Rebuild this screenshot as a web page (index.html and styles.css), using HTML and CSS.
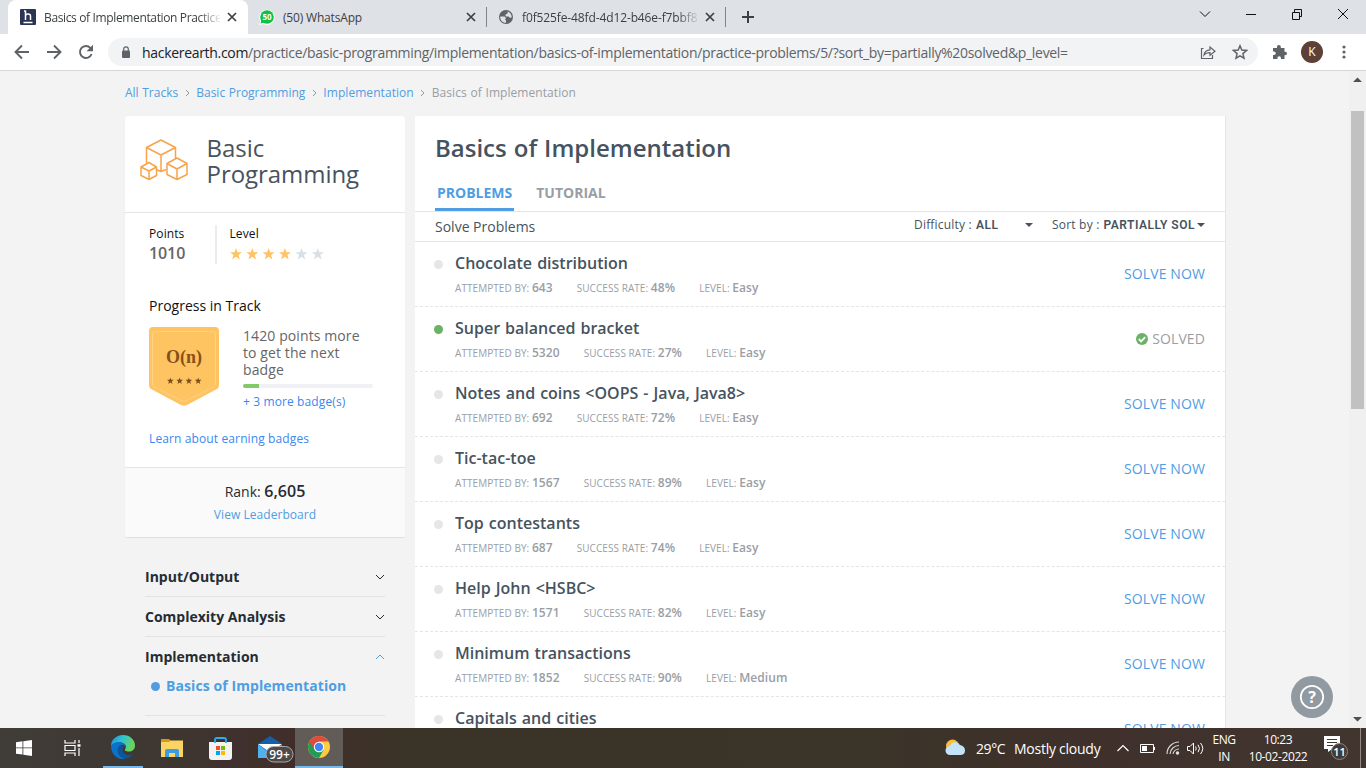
FILE: index.html
```html
<!DOCTYPE html>
<html lang="en">
<head>
<meta charset="utf-8">
<title>Basics of Implementation Practice Problems</title>
<link rel="stylesheet" href="styles.css">
</head>
<body>
<div class="screen">
  <header class="tabstrip">
    <div class="tab tab-active">
      <svg class="fav" width="16" height="16" viewBox="0 0 16 16"><rect width="16" height="16" rx="1" fill="#2c3454"/><path d="M5.500 1.500v9.500M5.500 7q0-2 2.500-2t2.500 2v4M4 2h1.500M3.500 13.500h9" fill="none" stroke="#fff" stroke-width="1.500"/></svg>
      <span class="tab-title t1">Basics of Implementation Practice</span>
      <svg class="x" width="10" height="10" viewBox="0 0 10 10"><path d="M1 1l8 8M9 1l-8 8"/></svg>
    </div>
    <div class="tab tab-two">
      <svg class="fav" width="16" height="16" viewBox="0 0 16 16"><path d="M0 16l1.300-4A7.600 7.600 0 1 1 4.300 15z" fill="#fff"/><circle cx="8" cy="8" r="6.800" fill="#0fc144"/><path d="M1.500 14.500l1-4 3 3z" fill="#0fc144"/><text x="8" y="10.900" text-anchor="middle" font-size="8" font-weight="700" fill="#fff">50</text></svg>
      <span class="tab-title t2">(50) WhatsApp</span>
      <svg class="x" width="10" height="10" viewBox="0 0 10 10"><path d="M1 1l8 8M9 1l-8 8"/></svg>
    </div>
    <div class="tab tab-three">
      <svg class="fav" width="16" height="16" viewBox="0 0 16 16"><circle cx="8" cy="8" r="7" fill="#5f6368"/><path d="M2.200 7.500h4.300l1.500 1.500-1 1.500 1 1v2.300C4 13.500 2 10.500 2.200 7.500zM9.500 2.500C12 3 13.800 5.500 13.700 8.200l-1.500.8-1.700-1.500H7.800l-.5-1.700 2.500-1.500z" fill="#dee1e6"/></svg>
      <span class="tab-title t3">f0f525fe-48fd-4d12-b46e-f7bbf8</span>
      <svg class="x" width="10" height="10" viewBox="0 0 10 10"><path d="M1 1l8 8M9 1l-8 8"/></svg>
    </div>
    <svg class="plus" width="12" height="12" viewBox="0 0 12 12"><path d="M6 0v12M0 6h12" stroke="#3c4043" stroke-width="2"/></svg>
    <div class="win">
      <svg width="12" height="12" viewBox="0 0 12 12"><path d="M1 3.500l5 5 5-5"/></svg>
      <svg width="12" height="12" viewBox="0 0 12 12"><path d="M1 6.500h10"/></svg>
      <svg width="12" height="12" viewBox="0 0 12 12"><path d="M1.500 4.500h7v7h-7zM3.500 4.500v-3h7v7h-2"/></svg>
      <svg width="12" height="12" viewBox="0 0 12 12"><path d="M1 1l10 10M11 1L1 11"/></svg>
    </div>
  </header>
  <div class="toolbar">
    <svg class="nav" width="16" height="16" viewBox="0 0 16 16"><path d="M15 8H2M8 1.500L1.500 8 8 14.500"/></svg>
    <svg class="nav" width="16" height="16" viewBox="0 0 16 16"><path d="M1 8h13M8 1.500L14.500 8 8 14.500"/></svg>
    <svg class="nav" width="16" height="16" viewBox="0 0 16 16"><path d="M13.600 10A6 6 0 1 1 12.500 4L14 5.500"/><path d="M15 .800v6.500H8.500z" fill="#5f6368" stroke="none"/></svg>
    <div class="omnibox">
      <svg class="lock" width="10" height="13" viewBox="0 0 10 13"><rect x="1" y="4.500" width="8" height="7.500" rx="1" fill="#5f6368"/><path d="M2.700 5V3.200a2.300 2.300 0 0 1 4.600 0V5" fill="none" stroke="#5f6368" stroke-width="1.200"/></svg>
      <span class="url"><b>hackerearth.com</b>/practice/basic-programming/implementation/basics-of-implementation/practice-problems/5/?sort_by=partially%20solved&amp;p_level=</span>
      <svg class="share" width="16" height="16" viewBox="0 0 16 16"><path d="M3.500 4.500H1.500v10h11v-3.500M4 11c.5-4 3-5 6-5.200V3l5 4.300-5 4V8.600C7.500 8.500 5.500 9 4 11z" fill="none" stroke="#5f6368" stroke-width="1.200"/></svg>
      <svg class="star" width="16" height="16" viewBox="0 0 16 16"><path d="M8 1.800l1.800 4.300 4.700.4-3.600 3.100 1.100 4.600L8 11.800l-4 2.400 1.100-4.600L1.500 6.500l4.700-.4z" fill="none" stroke="#5f6368" stroke-width="1.500"/></svg>
    </div>
    <svg class="puzzle" width="16" height="16" viewBox="0 0 16 16"><path d="M1 4h4V2.800a1.900 1.900 0 0 1 3.800 0V4h3.700v3.700h.7a1.800 1.800 0 0 1 0 3.600h-.7V15H9v-1a1.800 1.800 0 0 0-3.600 0v1H1v-4h1a1.700 1.700 0 0 0 0-3.500H1z" fill="#5f6368"/></svg>
    <span class="avatar">K</span>
    <svg class="dots" width="4" height="14" viewBox="0 0 4 14" fill="#5f6368"><circle cx="2" cy="2" r="1.600"/><circle cx="2" cy="7" r="1.600"/><circle cx="2" cy="12" r="1.600"/></svg>
  </div>
  <main class="viewport">
    <div class="page">
      <nav class="crumbs"><a class="c1">All Tracks</a><svg width="5" height="8" viewBox="0 0 5 8"><path d="M1 1l3 3-3 3"/></svg><a class="c2">Basic Programming</a><svg width="5" height="8" viewBox="0 0 5 8"><path d="M1 1l3 3-3 3"/></svg><a class="c3">Implementation</a><svg width="5" height="8" viewBox="0 0 5 8"><path d="M1 1l3 3-3 3"/></svg><span>Basics of Implementation</span></nav>
      <div class="columns">
        <aside class="side">
          <section class="card">
            <div class="track">
              <svg width="48" height="42" viewBox="0 0 48 42" fill="none" stroke="#f7a34b" stroke-width="1.500" stroke-linejoin="round"><path d="M6.500 24V8.500L21 1l14.500 7.500v11M6.500 8.500L21 16l14.500-7.500M21 16v16.500l5-2M21 32.500l-5-2"/><path d="M1 28l8-4.500 7.500 4.500v8.500L9 40.500l-8-4zM1 28l8 4 7.500-4M9 32v8.500M27 24.500l10-5.500 10 5.500v11l-10 5-10-5zM27 24.500L37 30l10-5.500M37 30v10.500"/></svg>
              <h2>Basic<br>Programming</h2>
            </div>
            <div class="stats">
              <div class="points"><span class="label">Points</span><span class="num">1010</span></div>
              <div class="level"><span class="label">Level</span>
                <svg width="96" height="12" viewBox="0 0 96 12" fill="#fec462"><defs><path id="s" d="M6 0l1.500 4.200H12L8.500 7l1.300 4.500L6 8.800l-3.800 2.700L3.500 7 0 4.200h4.500z"/></defs><use href="#s"/><use href="#s" x="16.300"/><use href="#s" x="32.600"/><use href="#s" x="48.900"/><g fill="#d9dfe7"><use href="#s" x="65.500"/><use href="#s" x="81.800"/></g></svg>
              </div>
            </div>
            <div class="progress">
              <h3>Progress in Track</h3>
              <div class="prog-row">
                <svg class="badge" width="70" height="79" viewBox="0 0 70 79"><path d="M4 0h62q4 0 4 4v54q0 3-3 4.500L38 78q-3 1.500-6 0L3 62.500Q0 61 0 58V4q0-4 4-4z" fill="#fec462"/><path d="M6 4.500h58q2.500 0 2.500 2.500v50q0 2-2 3L37 74q-2 1-4 0L5.500 60q-2-1-2-3V7q0-2.500 2.500-2.500z" fill="none" stroke="#ffd284" stroke-width="1"/><text x="35" y="35.500" text-anchor="middle" class="on">O(n)</text><g fill="#7d4e17"><use href="#s" transform="translate(18 50.500) scale(.56)"/><use href="#s" transform="translate(27.300 50.500) scale(.56)"/><use href="#s" transform="translate(36.500 50.500) scale(.56)"/><use href="#s" transform="translate(45.800 50.500) scale(.56)"/></g></svg>
                <div class="prog-text"><p>1420 points more<br>to get the next<br>badge</p><div class="bar"><i></i></div><a>+ 3 more badge(s)</a></div>
              </div>
              <a class="learn">Learn about earning badges</a>
            </div>
            <div class="rank"><div class="rk">Rank: <b>6,605</b></div><a>View Leaderboard</a></div>
          </section>
          <ul class="topics">
            <li><span>Input/Output</span><svg width="10" height="6" viewBox="0 0 10 6"><path d="M1 1l4 4 4-4"/></svg></li>
            <li><span>Complexity Analysis</span><svg width="10" height="6" viewBox="0 0 10 6"><path d="M1 1l4 4 4-4"/></svg></li>
            <li class="open"><span>Implementation</span><svg width="10" height="6" viewBox="0 0 10 6"><path d="M1 5l4-4 4 4"/></svg></li>
          </ul>
          <div class="sub"><i></i><span>Basics of Implementation</span></div>
        </aside>
        <section class="panel">
          <h1>Basics of Implementation</h1>
          <div class="ptabs"><span class="on-tab">PROBLEMS</span><span class="off-tab">TUTORIAL</span></div>
          <div class="filter"><span class="sp">Solve Problems</span>
            <div class="diff"><span>Difficulty :</span><b>ALL</b><i class="caret"></i></div>
            <div class="sort"><span>Sort by :</span><b>PARTIALLY SOL</b><i class="caret"></i></div>
          </div>
          <div class="row"><i class="dot"></i><div class="info"><h4>Chocolate distribution</h4><p><span>ATTEMPTED BY: <b>643</b></span><span>SUCCESS RATE: <b>48%</b></span><span>LEVEL: <b>Easy</b></span></p></div><a>SOLVE NOW</a></div>
          <div class="row done"><i class="dot"></i><div class="info"><h4>Super balanced bracket</h4><p><span>ATTEMPTED BY: <b>5320</b></span><span>SUCCESS RATE: <b>27%</b></span><span>LEVEL: <b>Easy</b></span></p></div><a><svg width="12" height="12" viewBox="0 0 12 12"><circle cx="6" cy="6" r="6" fill="#69b266"/><path d="M2.800 6l2.300 2.300L9.200 4.200" fill="none" stroke="#fff" stroke-width="1.900"/></svg>SOLVED</a></div>
          <div class="row"><i class="dot"></i><div class="info"><h4>Notes and coins &lt;OOPS - Java, Java8&gt;</h4><p><span>ATTEMPTED BY: <b>692</b></span><span>SUCCESS RATE: <b>72%</b></span><span>LEVEL: <b>Easy</b></span></p></div><a>SOLVE NOW</a></div>
          <div class="row"><i class="dot"></i><div class="info"><h4>Tic-tac-toe</h4><p><span>ATTEMPTED BY: <b>1567</b></span><span>SUCCESS RATE: <b>89%</b></span><span>LEVEL: <b>Easy</b></span></p></div><a>SOLVE NOW</a></div>
          <div class="row"><i class="dot"></i><div class="info"><h4>Top contestants</h4><p><span>ATTEMPTED BY: <b>687</b></span><span>SUCCESS RATE: <b>74%</b></span><span>LEVEL: <b>Easy</b></span></p></div><a>SOLVE NOW</a></div>
          <div class="row"><i class="dot"></i><div class="info"><h4>Help John &lt;HSBC&gt;</h4><p><span>ATTEMPTED BY: <b>1571</b></span><span>SUCCESS RATE: <b>82%</b></span><span>LEVEL: <b>Easy</b></span></p></div><a>SOLVE NOW</a></div>
          <div class="row"><i class="dot"></i><div class="info"><h4>Minimum transactions</h4><p><span>ATTEMPTED BY: <b>1852</b></span><span>SUCCESS RATE: <b>90%</b></span><span>LEVEL: <b>Medium</b></span></p></div><a>SOLVE NOW</a></div>
          <div class="row"><i class="dot"></i><div class="info"><h4>Capitals and cities</h4></div><a>SOLVE NOW</a></div>
        </section>
      </div>
    </div>
    <div class="scroll"><svg width="17" height="657" viewBox="0 0 17 657"><path d="M4 11h9L8.500 6.500zM4 646h9L8.500 650.500z" fill="#505050"/><rect x="2" y="40" width="13" height="298" fill="#c1c1c1"/></svg></div>
    <div class="help"><svg width="42" height="42" viewBox="0 0 42 42"><circle cx="21" cy="21" r="21" fill="#9199a1"/><circle cx="21" cy="21" r="11.200" fill="none" stroke="#fff" stroke-width="1.800"/><text x="21" y="26.500" text-anchor="middle" font-size="16" font-weight="700" fill="#fff">?</text></svg></div>
  </main>
  <footer class="taskbar">
    <div class="apps">
      <div class="app"><svg width="16" height="16" viewBox="0 0 16 16" fill="#fff"><path d="M0 2.300l6.500-1v6.200H0zM7.300 1.200L16 0v7.500H7.300zM0 8.300h6.500v6.300L0 13.700zM7.300 8.300H16V16l-8.700-1.200z"/></svg></div>
      <div class="app"><svg width="18" height="16" viewBox="0 0 18 16" fill="none" stroke="#fff" stroke-width="1.200"><path d="M1 0v3h10V0M1 5.500h10v5H1zM1 16v-3h10v3M15 0v3M15 8v8"/><path d="M13.500 5.500h3" stroke-width="2.500"/></svg></div>
      <div class="app run edge"><svg width="24" height="24" viewBox="0 0 24 24"><defs><linearGradient id="eg" x1="0" y1="0" x2="1" y2=".3"><stop offset="0" stop-color="#1f8fd8"/><stop offset=".5" stop-color="#2fc3d3"/><stop offset="1" stop-color="#6bd55a"/></linearGradient></defs><path d="M0 11C0 4 6 0 12 0c7 0 12 5 12 10.500 0 4-3 6-6 6-3.500 0-5-1-3.500-3C16 10 13 7.500 9 7.500c-4 0-7.500 1-9 3.500z" fill="url(#eg)"/><path d="M0 11c1.500-3 5-4 8-4 3.500 0 6.500 2.500 6.500 5-1-2-4-3-6-1-3.500 3.500-1 10 4 11.500l2 1C7 25.500 0 20 0 11z" fill="#0b72cb"/><path d="M8.500 11c-3.500 4.500-1.500 11 5 12.500 4 0 7-2 8.500-4.500-5 2-9.500.5-10.500-3-.5-2 .5-3 1-4-1-1.500-3-2-4-1z" fill="#0b559f"/></svg></div>
      <div class="app"><svg width="22" height="18" viewBox="0 0 22 18"><path d="M0 1.500h22V18H0z" fill="#fbd463"/><path d="M0 0h8l1.500 1.500L8 3H0z" fill="#d99711"/><path d="M4 18v-6q0-2 2-2h10q2 0 2 2v6h-4v-4H8v4z" fill="#3d9be2"/></svg></div>
      <div class="app"><svg width="23" height="23" viewBox="0 0 23 23"><path d="M0 5h23v15q0 3-3 3H3q-3 0-3-3z" fill="#f2f2f2"/><path d="M6 6V3q0-2 2-2h7q2 0 2 2v3" fill="none" stroke="#2baee9" stroke-width="1.800"/><path d="M7 9h4v4H7z" fill="#f25022"/><path d="M12 9h4v4h-4z" fill="#7fba00"/><path d="M7 14h4v4H7z" fill="#00a4ef"/><path d="M12 14h4v4h-4z" fill="#ffb900"/></svg></div>
      <div class="app mail"><svg width="36" height="28" viewBox="0 0 36 28"><path d="M0 9l12-8 12 8v14H0z" fill="#155fa9"/><path d="M0 9h24L12 17.500z" fill="#fff"/><path d="M0 9l12 8.500L24 9v14H0z" fill="#3d9be0"/><path d="M0 9.500L16 23H0z" fill="#4eb2ee"/><rect x="8" y="11.500" width="27" height="15.500" rx="7.700" fill="#4c4947" stroke="#aaa"/><text x="21.500" y="23.500" text-anchor="middle" font-size="12" font-weight="600" fill="#fff">99+</text></svg></div>
      <div class="app run current"><svg width="22" height="22" viewBox="0 0 22 22"><circle cx="11" cy="11" r="11" fill="#fccc44"/><path d="M1.500 5.500A11 11 0 0 0 11 22l4.700-8.300L11 11z" fill="#229c54"/><path d="M1.500 5.500A11 11 0 0 1 20.500 5.500H11L6.300 13.700z" fill="#dd4b3e"/><circle cx="11" cy="11" r="5.200" fill="#fff"/><circle cx="11" cy="11" r="4.200" fill="#4285f4"/></svg></div>
    </div>
    <div class="tray">
      <svg width="21" height="18" viewBox="0 0 21 18"><circle cx="7.500" cy="7" r="6.500" fill="#f9bd36"/><path d="M5 16a4.500 4.500 0 0 1 0-9 5.500 5.500 0 0 1 10-1q5 1 5 5.500 0 4.500-5 4.500z" fill="#c4e2f8"/></svg>
      <span class="weather">29°C</span><span class="cloudy">Mostly cloudy</span>
      <svg class="up" width="12" height="8" viewBox="0 0 12 8"><path d="M.5 7L6 1.500 11.500 7" fill="none" stroke="#fff" stroke-width="1.200"/></svg>
      <svg class="bat" width="15" height="9" viewBox="0 0 15 9"><path d="M.5.500h13v8H.5z" fill="none" stroke="#fff"/><path d="M2 2h5v5H2zM14 3h1v3h-1z" fill="#fff"/></svg>
      <svg class="wifi" width="14" height="14" viewBox="0 0 14 14" fill="none" stroke="#d8d6d3" stroke-width="1.200"><path d="M1 13A12 12 0 0 1 13 1M4 13A9 9 0 0 1 13 4.500M7 13A6 6 0 0 1 13 8"/><circle cx="11.500" cy="12" r="1.200" fill="#fff"/></svg>
      <svg class="vol" width="17" height="13" viewBox="0 0 17 13" fill="none" stroke="#fff"><path d="M.5 4.500H3L6.500 1v11L3 8.500H.5zM8.500 4.500q1.500 2 0 4M11 2.800q3 3.700 0 7.400M13.500 1q4.500 5.500 0 11"/></svg>
      <div class="stack lang"><span>ENG</span><span>IN</span></div>
      <div class="stack clock"><span>10:23</span><span>10-02-2022</span></div>
      <svg class="note" width="24" height="26" viewBox="0 0 24 26"><path d="M0 1h16v13H8l-4 3v-3H0z" fill="#fff"/><path d="M3 4.500h10M3 7.500h10M3 10.500h6" stroke="#403630"/><circle cx="15.500" cy="16.500" r="8" fill="#403b38" stroke="#8b8784"/><text x="15.500" y="20.700" text-anchor="middle" font-size="11" font-weight="600" fill="#fff">11</text></svg>
      <i class="peek"></i>
    </div>
  </footer>
</div>
</body>
</html>
```
FILE: styles.css
```css
* { box-sizing: border-box; }
body { margin: 0; font-family: "Open Sans", "Noto Sans", sans-serif; overflow: hidden; }
h1, h2, h3, h4, p, ul { margin: 0; padding: 0; font-weight: 400; }
ul { list-style: none; }
svg { display: block; flex: none; }
a { text-decoration: none; }
.screen { width: 1366px; height: 768px; display: flex; flex-direction: column; overflow: hidden; background: #f3f3f3; }

/* browser chrome */
.tabstrip { height: 34px; flex: none; background: #dee1e6; display: flex; align-items: center; }
.tab { height: 34px; display: flex; align-items: center; font-size: 12px; color: #3c4043; }
.tab-active { width: 240px; margin-left: 8px; padding-left: 12px; background: #fff; border-radius: 8px 8px 0 0; }
.tab-two { width: 239px; padding-left: 11px; border-right: 1px solid #808387; height: 20px; }
.tab-three { width: 239px; padding-left: 11px; border-right: 1px solid #808387; height: 20px; }
.tab-title { margin-left: 8px; white-space: nowrap; overflow: hidden; }
.t1, .t3 { width: 176px; -webkit-mask-image: linear-gradient(90deg, #000 155px, transparent 178px); }
.t1 { letter-spacing: -.36px; }
.t2 { width: 176px; letter-spacing: -.18px; }
.t3 { letter-spacing: -.12px; }
.x { margin-left: 7px; fill: none; stroke: #3c4043; stroke-width: 1.700; }
.plus { margin-left: 16px; }
.win { margin-left: auto; display: flex; gap: 34px; padding: 0 17px 6px 0; fill: none; stroke: #111; }
.toolbar { height: 37px; flex: none; background: #fff; border-bottom: 1px solid #d5d6d8; display: flex; align-items: center; padding-left: 14px; }
.nav { margin-right: 16px; fill: none; stroke: #5f6368; stroke-width: 1.900; }
.omnibox { width: 1150px; height: 28px; margin-left: -2px; border-radius: 14px; background: #f1f3f4; display: flex; align-items: center; padding-left: 13px; }
.url { width: 930px; margin-left: 11px; font-size: 14px; letter-spacing: -.312px; color: #5f6368; white-space: nowrap; }
.url b { font-weight: 400; color: #202124; }
.share { margin-left: 128px; }
.star { margin-left: 16px; }
.puzzle { margin-left: 14px; }
.avatar { width: 22px; height: 22px; border-radius: 50%; margin-left: 13px; background: #5d4037; color: #fff; font-size: 12px; line-height: 22px; text-align: center; }
.dots { margin-left: 19px; }

/* page */
.viewport { height: 657px; flex: none; position: relative; overflow: hidden; display: flex; justify-content: space-between; background: #f3f3f3; }
.page { width: 1101px; margin-left: 125px; }
.crumbs { height: 45px; display: flex; align-items: center; padding-bottom: 2px; font-size: 12px; color: #999ea5; word-spacing: .5px; }
.crumbs a { color: #4f9de3; }
.crumbs .c3, .crumbs span { letter-spacing: .06px; }
.crumbs svg { margin: 1px 6.500px 0; fill: none; stroke: #999; }
.columns { display: flex; gap: 10px; }
.side { width: 280px; }
.card { height: 421px; background: #fff; border-radius: 3px; box-shadow: 0 1px 1px #ddd; overflow: hidden; }
.track { height: 97px; border-bottom: 1px solid #e5e5e5; display: flex; padding: 19px 0 0 15px; }
.track svg { margin-top: 4px; }
.track h2 { margin-left: 18.500px; font-size: 24px; line-height: 26px; color: #46535e; letter-spacing: -.05px; }
.stats { height: 51px; padding-top: 12px; display: flex; }
.points { width: 92px; padding-left: 24px; border-right: 2px solid #ececec; display: flex; flex-direction: column; }
.label { display: block; font-size: 12px; line-height: 18px; color: #111; letter-spacing: .1px; }
.num { font-size: 16px; line-height: 20px; color: #666; font-weight: 600; letter-spacing: -.1px; }
.level { padding-left: 12.500px; }
.level svg { margin-top: 5px; }
.progress { height: 203px; padding: 32px 24px 0; }
.progress h3 { font-size: 14px; line-height: 20px; color: #111; }
.prog-row { display: flex; margin-top: 11px; height: 97px; }
.on { font: 700 18px "Liberation Serif", serif; fill: #87501b; }
.prog-text { margin-left: 24px; font-size: 12px; }
.prog-text p { font-size: 14px; line-height: 17px; color: #666; letter-spacing: .1px; }
.bar { width: 130px; height: 4px; border-radius: 2px; background: #eff1f4; margin: 6px 0 5px; overflow: hidden; }
.bar i { display: block; width: 16px; height: 4px; background: #82c96a; }
.prog-text a, .learn { display: block; color: #3a87ef; font-size: 12px; line-height: 18px; letter-spacing: .12px; }
.learn { margin-top: 6px; }
.rank { height: 70px; border-top: 1px solid #e5e5e5; background: #fafafa; padding-top: 12px; text-align: center; font-size: 12px; color: #252c33; }
.rk { font-size: 14px; line-height: 22px; }
.rk b { font-size: 16px; font-weight: 600; }
.rank a { display: block; color: #4f9de3; line-height: 24px; letter-spacing: .05px; }
.topics { margin: 20px 20px 0; font-size: 14px; font-weight: 700; color: #252c33; }
.topics li { height: 40px; display: flex; align-items: center; justify-content: space-between; border-bottom: 1px solid #e3e3e3; }
.topics svg { fill: none; stroke: #252c33; }
.topics li.open { border: 0; padding-bottom: 1px; }
.topics .open svg { stroke: #4f9de3; }
.sub { margin: 0 20px; height: 39px; border-bottom: 1px solid #e3e3e3; display: flex; align-items: flex-start; font-size: 14px; line-height: 18px; font-weight: 700; color: #4f9de3; letter-spacing: .08px; }
.sub i { width: 9px; height: 9px; border-radius: 50%; margin: 5px 6px 0 6px; background: #4f9de3; }
.panel { width: 811px; background: #fff; border-right: 1px solid #e5e5e5; }
.panel h1 { padding: 15px 0 0 20px; height: 60px; font-size: 24px; line-height: 34px; font-weight: 600; color: #46535e; word-spacing: .8px; }
.ptabs { height: 36px; display: flex; gap: 20px; padding-left: 20px; border-bottom: 1px solid #e5e5e5; font-size: 14px; line-height: 34px; font-weight: 700; color: #999ea5; }
.ptabs span { height: 35px; padding: 0 2px; }
.on-tab { color: #4f9de3; border-bottom: 3px solid #4f9de3; }
.filter { height: 30px; display: flex; align-items: center; padding: 0 20px; border-bottom: 1px solid #e5e5e5; color: #46535e; }
.sp { font-size: 14px; width: 479px; flex: none; }
.diff, .sort { display: flex; align-items: center; font-size: 12px; padding-bottom: 4px; flex: none; letter-spacing: .2px; }
.diff { width: 138px; }
.filter b { font-size: 12px; margin-left: 4px; white-space: nowrap; font-family: Roboto, sans-serif; letter-spacing: .5px; }
.diff b { width: 49px; font-weight: 600; }
.sort b { width: 93px; font-weight: 600; }
.caret { border: 4px solid transparent; border-top-color: #46535e; border-bottom: 0; flex: none; }
.row { height: 65px; display: flex; border-bottom: 1px dashed #e5e5e5; padding: 0 20px 0 19px; }
.dot { width: 9px; height: 9px; border-radius: 50%; background: #e4e6e8; margin-top: 18px; }
.done .dot { background: #69b266; }
.info { margin-left: 12px; }
.row h4 { font-size: 16px; line-height: 24px; padding-top: 9px; font-weight: 600; color: #46535e; word-spacing: .9px; }
.row p { display: flex; gap: 24px; font-size: 10px; line-height: 20px; padding-top: 3px; color: #999ea5; letter-spacing: .06px; }
.row p b { font-size: 12px; font-weight: 600; }
.row > a { margin-left: auto; display: flex; align-items: center; font-size: 14px; color: #4f9de3; height: 63px; letter-spacing: .1px; }
.done > a { color: #999ea5; gap: 4px; }
.scroll { width: 17px; background: #f0f0f0; }
.help { position: absolute; left: 1291px; top: 605px; }

/* taskbar */
.taskbar { height: 40px; flex: none; display: flex; justify-content: space-between; background: linear-gradient(90deg, #403c38 0, #3e3833 10%, #402d2a 22%, #3a3428 30%, #3b3429 65%, #3f302b 80%, #41362f 100%); color: #fff; }
.apps { display: flex; }
.app { width: 49px; height: 40px; display: flex; align-items: center; justify-content: center; }
.app:first-child { width: 48px; }
.run { border-bottom: 2px solid #76b9ed; }
.edge { width: 40px; margin: 0 4px 0 6px; }
.mail { padding: 2px 0 0 11px; width: 50px; }
.current { width: 48px; background: #625c58; }
.tray { width: 421px; display: flex; align-items: center; font-size: 14px; }
.weather { margin-left: 10px; width: 30px; letter-spacing: -.4px; }
.cloudy { margin-left: 8px; width: 87px; white-space: nowrap; letter-spacing: -.25px; }
.up { margin-left: 16px; }
.bat { margin-left: 11px; }
.wifi { margin-left: 11px; }
.vol { margin-left: 7px; }
.stack { display: flex; flex-direction: column; align-items: center; font-size: 12px; line-height: 17px; }
.lang { margin-left: 8px; width: 24px; letter-spacing: -.5px; }
.clock { margin-left: 12px; width: 60px; letter-spacing: -.4px; white-space: nowrap; padding-bottom: 1px; }
.note { margin-left: 16px; }
.peek { width: 1px; height: 40px; margin-left: 12px; background: #918b87; }
```
